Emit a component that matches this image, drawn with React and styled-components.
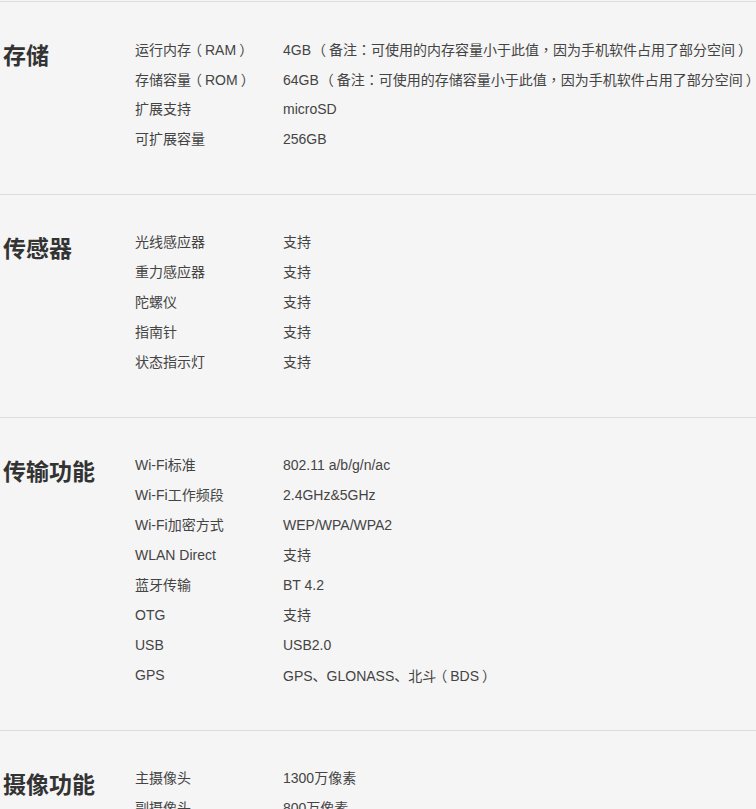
import React from "react";
import styled, { createGlobalStyle } from "styled-components";

const Global = createGlobalStyle`
  html, body { margin: 0; padding: 0; background: #f5f5f5; }
  body { font-family: "Liberation Sans", "Noto Sans CJK SC", sans-serif; color: #333; }
`;

const Page = styled.div`
  padding-top: 1px;
  width: 756px;
  overflow: hidden;
`;

const Section = styled.section`
  display: grid;
  grid-template-columns: 135px 1fr;
  border-top: 1px solid #dcdcdc;
  padding: 32px 0 40px 0;
`;

const Heading = styled.h2`
  margin: 0;
  padding-left: 3px;
  font-size: 23px;
  font-weight: bold;
  line-height: 40px;
  color: #333;
  font-family: "Noto Sans CJK SC", sans-serif;
`;

const Rows = styled.div`
  display: flex;
  flex-direction: column;
`;

const Row = styled.div`
  display: grid;
  grid-template-columns: 148px 1fr;
  height: 30px;
  line-height: 30px;
  font-size: 14px;
  white-space: nowrap;
`;

const Cell = styled.span`
  color: #444;
`;

const Punct = styled.span`
  font-family: "Noto Sans CJK TC", sans-serif;
  display: inline-block;
  transform: translateX(${(p) => p.$shift}px);
`;

const SHIFT = { "（": -3, "）": 3, "，": 0, "：": 0 };
const PUNCT = /([，：（）])/;

function Text({ children }) {
  return children
    .split(PUNCT)
    .map((part, i) =>
      part.length === 1 && part in SHIFT ? (
        <Punct key={i} $shift={SHIFT[part]}>{part}</Punct>
      ) : (
        part
      )
    );
}

const data = [
  {
    title: "存储",
    rows: [
      ["运行内存（RAM）", "4GB （备注：可使用的内存容量小于此值，因为手机软件占用了部分空间）"],
      ["存储容量（ROM）", "64GB （备注：可使用的存储容量小于此值，因为手机软件占用了部分空间）"],
      ["扩展支持", "microSD"],
      ["可扩展容量", "256GB"],
    ],
  },
  {
    title: "传感器",
    rows: [
      ["光线感应器", "支持"],
      ["重力感应器", "支持"],
      ["陀螺仪", "支持"],
      ["指南针", "支持"],
      ["状态指示灯", "支持"],
    ],
  },
  {
    title: "传输功能",
    rows: [
      ["Wi-Fi标准", "802.11 a/b/g/n/ac"],
      ["Wi-Fi工作频段", "2.4GHz&5GHz"],
      ["Wi-Fi加密方式", "WEP/WPA/WPA2"],
      ["WLAN Direct", "支持"],
      ["蓝牙传输", "BT 4.2"],
      ["OTG", "支持"],
      ["USB", "USB2.0"],
      ["GPS", "GPS、GLONASS、北斗（BDS）"],
    ],
  },
  {
    title: "摄像功能",
    rows: [
      ["主摄像头", "1300万像素"],
      ["副摄像头", "800万像素"],
      ["闪光灯", "支持"],
    ],
  },
];

export default function App() {
  return (
    <Page>
      <Global />
      {data.map((s) => (
        <Section key={s.title}>
          <Heading>{s.title}</Heading>
          <Rows>
            {s.rows.map(([l, v]) => (
              <Row key={l}>
                <Cell><Text>{l}</Text></Cell>
                <Cell><Text>{v}</Text></Cell>
              </Row>
            ))}
          </Rows>
        </Section>
      ))}
    </Page>
  );
}
